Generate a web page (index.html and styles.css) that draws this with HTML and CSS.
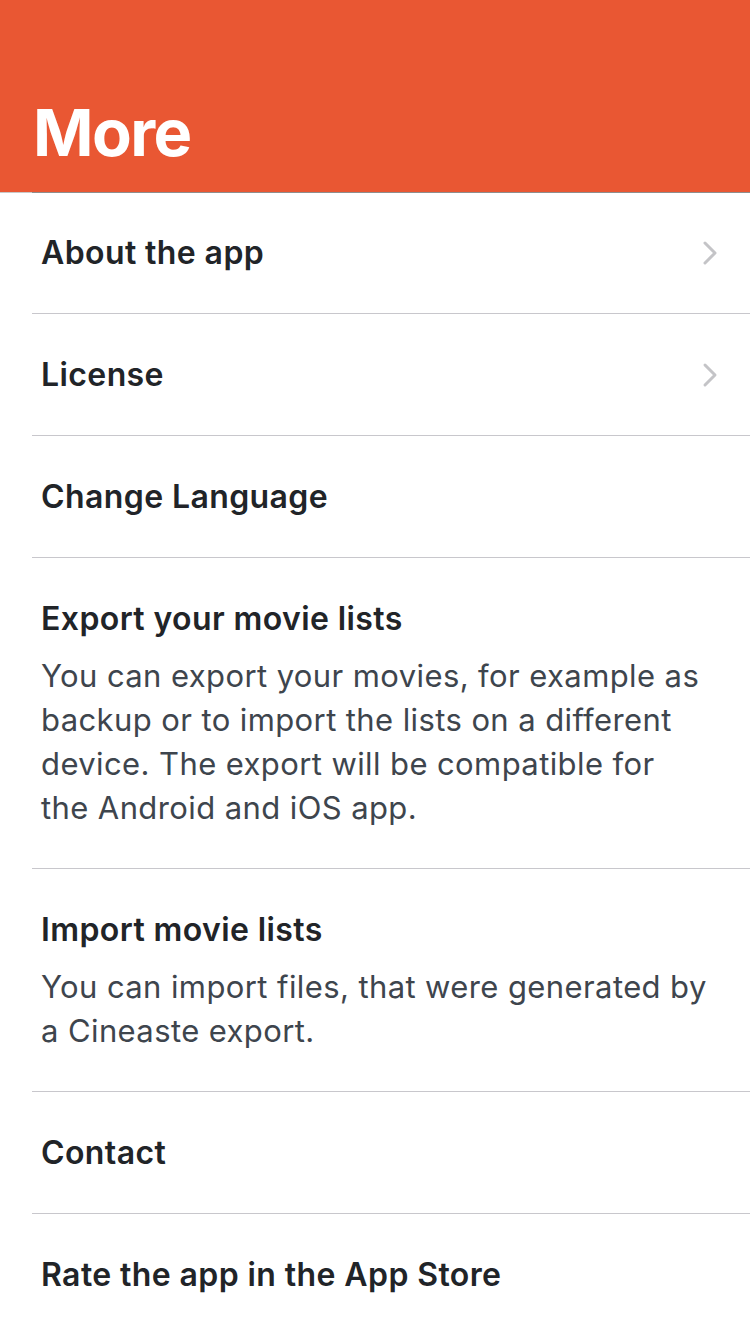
FILE: index.html
```html
<!DOCTYPE html>
<html lang="en">
<head>
<meta charset="utf-8">
<title>More</title>
<link rel="stylesheet" href="styles.css">
</head>
<body>
<header class="header">
  <h1 class="header-title">More</h1>
</header>
<div class="header-rule"><span class="header-rule-inner"></span></div>
<ul class="list">
  <li class="row row-first">
    <span class="row-title">About the app</span>
    <svg class="chevron" viewBox="0 0 16 26" width="16" height="26"><path d="M3 3 L13 13 L3 23" fill="none" stroke="#c4c4c7" stroke-width="3" stroke-linecap="round" stroke-linejoin="round"/></svg>
  </li>
  <li class="row">
    <span class="row-title">License</span>
    <svg class="chevron" viewBox="0 0 16 26" width="16" height="26"><path d="M3 3 L13 13 L3 23" fill="none" stroke="#c4c4c7" stroke-width="3" stroke-linecap="round" stroke-linejoin="round"/></svg>
  </li>
  <li class="row">
    <span class="row-title">Change Language</span>
  </li>
  <li class="row row-stack">
    <span class="row-title">Export your movie lists</span>
    <p class="row-desc">You can export your movies, for example as backup or to import the lists on a different device. The export will be compatible for the Android and iOS app.</p>
  </li>
  <li class="row row-stack">
    <span class="row-title">Import movie lists</span>
    <p class="row-desc">You can import files, that were generated by a Cineaste export.</p>
  </li>
  <li class="row">
    <span class="row-title">Contact</span>
  </li>
  <li class="row">
    <span class="row-title">Rate the app in the App Store</span>
  </li>
</ul>
</body>
</html>
```

FILE: styles.css
```css
* { box-sizing: border-box; }
html, body {
  margin: 0;
  padding: 0;
  background: #ffffff;
  font-family: Inter, "Noto Sans", "Liberation Sans", sans-serif;
}
.header {
  height: 192px;
  background: #e95733;
  padding: 0 33px;
  display: flex;
  align-items: flex-end;
}
.header-title {
  margin: 0 0 19px 0;
  color: #ffffff;
  font-size: 65px;
  font-weight: 700;
  line-height: 80px;
  letter-spacing: -1.6px;
}
.header-rule {
  height: 1px;
  background: #c8c8c8;
}
.header-rule-inner {
  display: block;
  height: 1px;
  margin-left: 32px;
  background: #8e8e8e;
}
.list {
  list-style: none;
  margin: 0;
  padding: 0 0 0 32px;
}
.row {
  display: flex;
  align-items: center;
  justify-content: space-between;
  padding: 40px 32px 40px 9px;
  border-bottom: 1px solid #c8c7cc;
}
.row-first {
  padding-top: 39px;
}
.row-stack {
  flex-direction: column;
  align-items: flex-start;
  gap: 15px;
  padding-right: 41px;
  padding-bottom: 38px;
}
.row-title {
  font-size: 32px;
  font-weight: 600;
  line-height: 41px;
  color: #212428;
  letter-spacing: 0.4px;
}
.row-desc {
  margin: 0;
  font-size: 31px;
  font-weight: 400;
  line-height: 44px;
  color: #3e454d;
  letter-spacing: 0.4px;
}
.chevron {
  display: block;
  flex: none;
}
```
